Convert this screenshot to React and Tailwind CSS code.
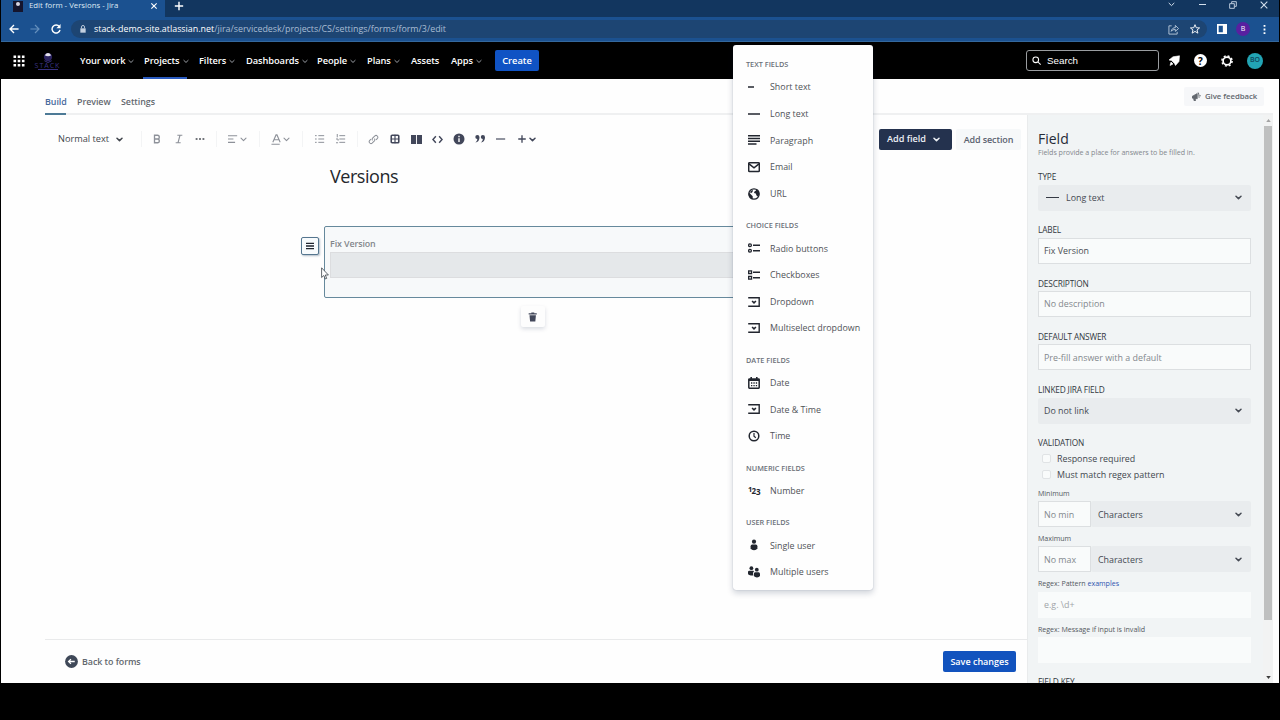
import React from "react";

const Chev = ({ className = "w-[7px] h-[5px]", sw = 1.5 }) => (
  <svg viewBox="0 0 7 5" className={"shrink-0 " + className} fill="none" stroke="currentColor" strokeWidth={sw} strokeLinecap="round" strokeLinejoin="round">
    <path d="M1 1.2 3.5 3.6 6 1.2" />
  </svg>
);

const Svg = ({ children, className = "w-3 h-3" }) => (
  <svg viewBox="0 0 12 12" className={"shrink-0 " + className} fill="none" stroke="currentColor" strokeWidth="1.4">
    {children}
  </svg>
);

const icons = {
  short: <Svg><path d="M0 6H6" strokeWidth="1.5" /></Svg>,
  long: <Svg><path d="M0 6H12" strokeWidth="1.5" /></Svg>,
  paragraph: <Svg><path d="M0 1.8H12M0 4.5H12M0 7.2H12M0 10H8.5" strokeWidth="1.5" /></Svg>,
  email: (
    <Svg>
      <rect x=".7" y="1.7" width="10.6" height="8.8" rx=".8" strokeWidth="1.5" />
      <path d="M1 2.8 6 6.8 11 2.8" strokeWidth="1.5" />
    </Svg>
  ),
  url: (
    <Svg>
      <circle cx="6" cy="6" r="5.2" strokeWidth="1.3" />
      <path d="M1 4.5 4.7 8.3V11.3C2 10.8.6 8.5.6 6ZM4 1.1 8 .9 8 2.6 6.5 3.6 6 5 7.8 5.6 8.5 7.4 10.2 8.8C12 6 11.4 2 8 1L4.5 1Z M3.5 2.5 5 2 4.5 4 3 5.2 2 4Z" fill="currentColor" stroke="none" />
    </Svg>
  ),
  radio: (
    <Svg>
      <circle cx="2" cy="3.3" r="1.4" strokeWidth="1.3" />
      <circle cx="2" cy="8.8" r="1.4" strokeWidth="1.3" />
      <path d="M5 3.3H12M5 8.8H12" strokeWidth="1.5" />
    </Svg>
  ),
  check: (
    <Svg>
      <path d="M.7 1.9H3.5V4.6H.7ZM.7 7.4H3.5V10.1H.7Z" strokeWidth="1.4" />
      <path d="M5 3.3H12M5 8.8H12" strokeWidth="1.5" />
    </Svg>
  ),
  dropdown: (
    <Svg>
      <path d="M.2 1.8H11.2V10.2H.2" strokeWidth="1.4" />
      <path d="M4.1 5 6 6.9 7.9 5" strokeWidth="1.6" />
    </Svg>
  ),
  date: (
    <Svg>
      <rect x=".8" y="1.9" width="10.4" height="9.3" rx=".6" strokeWidth="1.5" />
      <path d="M.8 3H11.2" strokeWidth="2" />
      <path d="M3.2 0V2.5M8.8 0V2.5" strokeWidth="1.6" />
      <path d="M3 6H9.5M3 8.6H9.5" strokeDasharray="1.3 1.1" strokeWidth="1.3" />
    </Svg>
  ),
  time: (
    <Svg>
      <circle cx="6" cy="6" r="4.8" strokeWidth="1.5" />
      <path d="M6 3V6.2L7.8 7.8" strokeWidth="1.2" />
    </Svg>
  ),
  number: (
    <span className="flex h-3 w-3 shrink-0 items-center font-bold leading-3">
      <span className="-mt-[3px] w-[3.5px] text-[7.5px]">1</span>
      <span className="w-[4.5px] text-[8px]">2</span>
      <span className="mt-[2px] w-[4px] text-[8px]">3</span>
    </span>
  ),
  user: (
    <Svg>
      <circle cx="6" cy="2.7" r="2.1" fill="currentColor" stroke="none" />
      <path d="M2.6 7.2Q2.6 5.6 4.2 5.6H7.8Q9.4 5.6 9.4 7.2V9.2Q8.6 11.2 6 11.2T2.6 9.2Z" fill="currentColor" stroke="none" />
    </Svg>
  ),
  users: (
    <Svg>
      <circle cx="3.4" cy="2.2" r="1.9" fill="currentColor" stroke="none" />
      <circle cx="8.8" cy="3.7" r="1.9" fill="currentColor" stroke="none" />
      <path d="M0 6Q0 4.8 1.4 4.8H5.4L6 5.6Q5 6.2 5 7.6V9.6Q0 9.6 0 7.6ZM5.8 8Q5.8 6.3 7.2 6.3H10.6Q12 6.3 12 8V10Q11 11.4 9 11.4T5.8 10Z" fill="currentColor" stroke="none" />
    </Svg>
  ),
};

const groups = [
  ["TEXT FIELDS", [["short", "Short text"], ["long", "Long text"], ["paragraph", "Paragraph"], ["email", "Email"], ["url", "URL"]]],
  ["CHOICE FIELDS", [["radio", "Radio buttons"], ["check", "Checkboxes"], ["dropdown", "Dropdown"], ["dropdown", "Multiselect dropdown"]]],
  ["DATE FIELDS", [["date", "Date"], ["dropdown", "Date & Time"], ["time", "Time"]]],
  ["NUMERIC FIELDS", [["number", "Number"]]],
  ["USER FIELDS", [["user", "Single user"], ["users", "Multiple users"]]],
];

function FieldMenu() {
  return (
    <div className="absolute left-[733px] top-[45px] h-[545px] w-[140px] rounded-[3px] bg-[#fefefe] pl-[13px] pt-[5px] shadow-[0_3px_6px_rgba(9,30,66,0.2),0_0_1px_rgba(9,30,66,0.35)]">
      {groups.map(([title, items]) => (
        <div key={title} className="mb-[4.4px]">
          <div className="h-[23.6px] whitespace-nowrap pt-[10px] text-[7.3px] font-semibold leading-[9px] text-[#6b7078]">{title}</div>
          {items.map(([icon, label]) => (
            <div key={label} className="flex h-[26.67px] items-center gap-[10px] pl-[2px] text-[8.9px] text-[#505358]">
              <span className="text-[#22262f]">{icons[icon]}</span>
              <span className="whitespace-nowrap">{label}</span>
            </div>
          ))}
        </div>
      ))}
    </div>
  );
}

const nav = [
  ["Your work", "w-[64px]", true],
  ["Projects", "w-[55px]", true],
  ["Filters", "w-[47px]", true],
  ["Dashboards", "w-[71px]", true],
  ["People", "w-[50px]", true],
  ["Plans", "w-[44px]", true],
  ["Assets", "w-[40px]", false],
  ["Apps", "w-[44px]", true],
];

function Browser() {
  return (
    <>
      <div className="flex h-[17px] shrink-0 items-center justify-between bg-[#12365f] text-white">
        <div className="flex h-full items-center">
          <div className="flex h-full w-[164px] items-center bg-[#1b5190] pb-[5px] pl-[12px]">
            <div className="flex h-[11px] w-[10px] justify-center bg-[#15152d] pt-[1px]">
              <div className="h-[4px] w-[4px] rounded-full bg-[#d7d4df]" />
            </div>
            <span className="ml-[6px] w-[121px] whitespace-nowrap text-[7.8px] text-[#dfe9f4]">Edit form - Versions - Jira</span>
            <Svg className="h-[8px] w-[8px]"><path d="M2 2 10 10M10 2 2 10" strokeWidth="1.7" /></Svg>
          </div>
          <Svg className="mb-[5px] ml-[9px] h-[10px] w-[10px]"><path d="M6 1V11M1 6H11" strokeWidth="1.7" /></Svg>
        </div>
        <div className="flex items-center pb-[8px] pr-[11px] text-[#d3dfec]">
          <Chev className="h-[5px] w-[7px]" sw={1} />
          <span className="ml-[24px] h-px w-[7px] bg-current" />
          <Svg className="ml-[23px] h-[8px] w-[8px]"><path d="M1 4H8V11H1ZM4 3.5V1H11V8H8.5" strokeWidth="1.3" /></Svg>
          <Svg className="ml-[23px] h-[8px] w-[8px]"><path d="M1 1 11 11M11 1 1 11" strokeWidth="1.6" /></Svg>
        </div>
      </div>
      <div className="flex h-[24px] shrink-0 items-center bg-[#1b5190] text-white">
        <Svg className="ml-[8px] h-[10px] w-[10px]"><path d="M11.5 6H1.5M6 1.2 1.2 6 6 10.8" strokeWidth="1.6" /></Svg>
        <Svg className="ml-[11px] h-[10px] w-[10px] text-[#6590bd]"><path d="M.5 6H10.5M6 1.2 10.8 6 6 10.8" /></Svg>
        <Svg className="ml-[11px] h-[10px] w-[10px]">
          <path d="M10 3.2A4.8 4.8 0 1 0 10.8 7" strokeWidth="1.7" />
          <path d="M11.5 0V5H6.5Z" fill="currentColor" stroke="none" />
        </Svg>
        <div className="ml-[10px] flex h-[18px] w-[1136px] items-center rounded-full bg-[#1d4573] pl-[8px]">
          <Svg className="h-[8px] w-[8px] text-[#c3d0df]"><rect x="2" y="5" width="8" height="6.5" fill="currentColor" stroke="none" /><path d="M3.7 5V3A2.3 2.3 0 0 1 8.3 3V5" /></Svg>
          <span className="ml-[7px] whitespace-nowrap text-[8.9px] text-[#a9bdd3]">
            <span className="text-white">stack-demo-site.atlassian.net</span>/jira/servicedesk/projects/CS/settings/forms/form/3/edit
          </span>
          <span className="grow" />
          <Svg className="mr-[11px] h-[11px] w-[11px] text-[#b9c9db]"><path d="M4 2H1V11H10V8.5M3.5 8C4 5 6 4 8 4V1.5L11.5 5 8 8V6C6 6 4.5 6.5 3.5 8Z" strokeWidth="1" /></Svg>
          <Svg className="mr-[7px] h-[10px] w-[10px]"><path d="M6 .8 7.5 4.5 11.5 4.7 8.4 7.2 9.5 11 6 8.9 2.5 11 3.6 7.2 .5 4.7 4.5 4.5Z" strokeWidth="1.1" /></Svg>
        </div>
        <Svg className="ml-[10px] h-[10px] w-[10px]"><path d="M1 1H11V11H1Z" strokeWidth="2" /><path d="M7 1H11V11H7Z" fill="currentColor" stroke="none" /></Svg>
        <div className="ml-[9px] flex h-[14px] w-[14px] items-center justify-center rounded-full bg-[#5820a0] text-[7px]">B</div>
        <Svg className="ml-[9px] h-[11px] w-[11px]"><path d="M5 1H7V3H5ZM5 5H7V7H5ZM5 9H7V11H5Z" fill="currentColor" stroke="none" /></Svg>
      </div>
      <div className="h-px shrink-0 bg-[#34689d]" />
    </>
  );
}

function JiraHeader() {
  return (
    <div className="flex h-[37px] shrink-0 items-center bg-black text-white">
      <svg viewBox="0 0 12 12" className="ml-[12px] h-[12px] w-[12px]" fill="currentColor">
        <path d="M.5.5h2.6v2.6H.5zM4.7.5h2.6v2.6H4.7zM8.9.5h2.6v2.6H8.9zM.5 4.7h2.6v2.6H.5zM4.7 4.7h2.6v2.6H4.7zM8.9 4.7h2.6v2.6H8.9zM.5 8.9h2.6v2.6H.5zM4.7 8.9h2.6v2.6H4.7zM8.9 8.9h2.6v2.6H8.9z" />
      </svg>
      <div className="ml-[9px] flex w-[27px] flex-col items-center">
        <svg viewBox="0 0 12 12" className="h-[11px] w-[12px]">
          <circle cx="6" cy="5.5" r="4.5" fill="#2b2360" />
          <path d="M2.5 3.5Q6-1.5 9.5 3.5Q6 5.5 2.5 3.5Z" fill="#e5e2ec" />
          <path d="M2 9.5 6 11.5 10 9.5" stroke="#3d348a" fill="none" />
        </svg>
        <span className="h-[6px] text-[7px] leading-[6px] tracking-[1px] text-[#393280]">STACK</span>
        <span className="h-px w-[20px] bg-[#393280]" />
      </div>
      <div className="ml-[19px] flex h-full items-center text-[9.3px] font-semibold">
        {nav.map(([label, w, chev]) => (
          <div key={label} className={"flex h-full shrink-0 flex-col " + w}>
            <div className="flex h-[35px] items-center gap-[3px] whitespace-nowrap pt-[3px]">
              <span className="tracking-[-0.08px]">{label}</span>
              {chev && <Chev className="h-[5px] w-[6px] text-[#a3a7ad]" sw={1.1} />}
            </div>
            {label === "Projects" && <div className="-ml-[1px] h-[2px] w-[44px] bg-[#2a5bc0]" />}
          </div>
        ))}
        <div className="flex h-[21px] w-[44px] items-center justify-center rounded-[2px] bg-[#1053c4]">Create</div>
      </div>
      <span className="grow" />
      <div className="flex h-[21px] w-[133px] items-center rounded-[3px] border border-[#9a9da0] pl-[5px] font-['Liberation_Sans',sans-serif] text-[9.8px]">
        <Svg className="h-[9px] w-[9px]"><circle cx="5" cy="5" r="3.8" /><path d="M8 8 11.5 11.5" /></Svg>
        <span className="ml-[6px] pt-[1px]">Search</span>
      </div>
      <Svg className="ml-[9px] h-[12px] w-[12px]">
        <path d="M11.5 .8 11 6.5 7.5 10.5 6.5 8.5 3.5 5.5 1 5 5 1.8Z M3 7 5 9 2 10.5Z" fill="currentColor" stroke="currentColor" strokeWidth=".6" />
      </Svg>
      <div className="ml-[14px] flex h-[13px] w-[13px] items-center justify-center rounded-full bg-white text-[10px] font-bold leading-none text-black">?</div>
      <Svg className="ml-[14px] h-[12px] w-[12px]">
        <circle cx="6" cy="6" r="3.9" strokeWidth="1.7" />
        <circle cx="6" cy="6" r="5.1" strokeWidth="1.5" strokeDasharray="2 2.006" />
      </Svg>
      <div className="ml-[14px] mr-[16px] flex h-[16px] w-[16px] items-center justify-center rounded-full bg-[#22a4b4] text-[7px] font-semibold text-[#10465c]">BO</div>
    </div>
  );
}

const Sep = ({ className }) => <span className={"h-[16px] w-px shrink-0 bg-[#f3f4f5] " + className} />;

function Toolbar() {
  return (
    <div className="flex h-[48px] shrink-0 items-center pl-[13px] text-[#8d9199]">
      <span className="w-[58px] whitespace-nowrap text-[9.2px] text-[#42464d]">Normal text</span>
      <Chev className="h-[5px] w-[7px] text-[#42464d]" />
      <Sep className="ml-[18px]" />
      <Svg className="ml-[10px] h-[10px] w-[10px]"><path d="M3 1.5H6.5A2.2 2.2 0 0 1 6.5 6H3ZM3 6H7A2.3 2.3 0 0 1 7 10.5H3Z" strokeWidth="1.6" /></Svg>
      <Svg className="ml-[12px] h-[10px] w-[10px]"><path d="M4 1.5H10M2 10.5H8M7.2 1.5 4.8 10.5" strokeWidth="1.3" /></Svg>
      <Svg className="ml-[11px] h-[10px] w-[10px] text-[#42464d]"><path d="M.8 6H3M4.9 6H7.1M9 6H11.2" strokeWidth="2" /></Svg>
      <Sep className="ml-[11px]" />
      <Svg className="ml-[11px] h-[10px] w-[10px]"><path d="M0 2H11M0 6H6.5M0 10H8.5" strokeWidth="1.3" /></Svg>
      <Chev className="ml-[2px] h-[5px] w-[7px]" sw={1.1} />
      <Sep className="ml-[12px]" />
      <Svg className="ml-[11px] h-[11px] w-[11px]"><path d="M2 9 5.5 1H6.5L10 9M3.5 6.3H8.5M.5 11.2H9.5" strokeWidth="1.2" /></Svg>
      <Chev className="ml-[1px] h-[5px] w-[7px]" sw={1.1} />
      <Sep className="ml-[12px]" />
      <Svg className="ml-[12px] h-[10px] w-[10px]"><path d="M0 2H2M4 2H11M0 6H2M4 6H11M0 10H2M4 10H11" strokeWidth="1.2" /></Svg>
      <Svg className="ml-[11px] h-[10px] w-[10px]"><path d="M1.5 0V4M4 2H11M4 6H11M0 6H2.5V8M4 10H11M0 10.5H2.5" strokeWidth="1.2" /></Svg>
      <Sep className="ml-[11px]" />
      <Svg className="ml-[10px] h-[11px] w-[11px]"><path d="M5 7A2 2 0 0 1 5 4.5L7.5 2A2 2 0 0 1 10.3 4.8L8.8 6.3M7 5A2 2 0 0 1 7 7.5L4.5 10A2 2 0 0 1 1.7 7.2L3.2 5.7" strokeWidth="1.1" /></Svg>
      <div className="flex items-center text-[#42475a]">
        <Svg className="ml-[10.5px] h-[10px] w-[10px]"><rect x="1.5" y="1.5" width="9" height="9" rx="1" strokeWidth="1.9" /><path d="M6 1V11M1 6H11" /></Svg>
        <Svg className="ml-[11px] h-[11px] w-[11px]"><path d="M0 1H5.5V11H0ZM6.5 1H12V11H6.5Z" fill="currentColor" stroke="none" /></Svg>
        <Svg className="ml-[10.5px] h-[11px] w-[11px]"><path d="M4.2 2.5 1 6 4.2 9.5M7.8 2.5 11 6 7.8 9.5" strokeWidth="1.6" /></Svg>
        <Svg className="ml-[9.5px] h-[12px] w-[12px]"><circle cx="6" cy="6" r="5.5" fill="currentColor" stroke="none" /><path d="M6 2.8V4.2M6 5.2V9" stroke="white" strokeWidth="1.4" /></Svg>
        <Svg className="ml-[9.5px] h-[12px] w-[12px]">
          <path d="M3.3 2A2 2 0 1 0 3.3 6C3.3 8 2 8.8 1.3 9.5Q5.5 9 5.5 4.2 5.5 2 3.3 2ZM8.8 2A2 2 0 1 0 8.8 6C8.8 8 7.5 8.8 6.8 9.5Q11 9 11 4.2 11 2 8.8 2Z" fill="currentColor" stroke="none" />
        </Svg>
        <Svg className="ml-[10px] h-[10px] w-[10px]"><path d="M0 6H11" /></Svg>
        <Svg className="ml-[11px] h-[10px] w-[10px]"><path d="M6 1.5V10.5M1.5 6H10.5" strokeWidth="1.6" /></Svg>
        <Chev className="ml-[2px] h-[5px] w-[7px]" />
      </div>
      <span className="grow" />
      <div className="mr-[4px] flex h-[21px] w-[73px] items-center rounded-[2px] bg-[#24324e] pl-[8px] text-[9.1px] font-semibold text-[#edf0f5]">
        <span className="w-[46px] whitespace-nowrap">Add field</span>
        <Chev />
      </div>
      <div className="mr-[6px] flex h-[21px] w-[65px] items-center justify-center whitespace-nowrap rounded-[2px] bg-[#f6f8f9] pt-[1px] text-[9px] font-semibold tracking-[-0.1px] text-[#5b6270]">Add section</div>
    </div>
  );
}

function Editor() {
  return (
    <div className="flex w-[982px] shrink-0 flex-col">
      <Toolbar />
      <div className="flex h-[476px] shrink-0 flex-col pl-[256px]">
        <div className="h-[63px] pl-[29px] text-[18px] leading-[26px] tracking-[-0.45px] text-[#24272c]">Versions</div>
        <div className="flex h-[72px] items-start">
          <div className="mt-[11px] flex h-[18px] w-[18px] items-center justify-center rounded-[2px] border border-[#55768f] bg-[#f8fbfd] text-[#20252f] shadow-[1px_1px_2px_rgba(60,90,120,0.4)]">
            <Svg className="h-[8px] w-[8px]"><path d="M0 2H12M0 6H12M0 10H12" strokeWidth="1.9" /></Svg>
          </div>
          <div className="ml-[5px] flex h-[72px] w-[420px] flex-col rounded-[2px] border border-[#66899c] bg-[#f7f9fa] pl-[5px] pt-[10px]">
            <span className="h-[15px] text-[8.9px] font-semibold leading-[14px] tracking-[-0.1px] text-[#82868b]">Fix Version</span>
            <div className="h-[26px] border border-[#dcdddf] bg-[#e5e8ea]" />
          </div>
        </div>
        <div className="ml-[220px] mt-[8px] flex h-[21px] w-[24px] items-center justify-center rounded-[2px] bg-[#fdfdfd] text-[#42475a] shadow-[0_2px_4px_rgba(9,30,66,0.15)]">
          <Svg className="h-[10px] w-[10px]"><path d="M.8 1.5H4V.5H7.5V1.5H10.5V3H.8ZM1.8 4H9.5L8.8 11.5H2.5Z" fill="currentColor" stroke="none" /></Svg>
        </div>
      </div>
      <div className="flex h-[44px] shrink-0 items-center border-t border-[#e9eaeb] pl-[20px]">
        <Svg className="h-[13px] w-[13px] text-[#3f4858]"><circle cx="6" cy="6" r="5.9" fill="currentColor" stroke="none" /><path d="M9 6H3.5M5.5 3.8 3.3 6 5.5 8.2" stroke="white" strokeWidth="1.2" /></Svg>
        <span className="ml-[4px] text-[8.9px] font-semibold tracking-[-0.05px] text-[#62676d]">Back to forms</span>
        <span className="grow" />
        <div className="mr-[11px] flex h-[21px] w-[73px] items-center justify-center whitespace-nowrap rounded-[2px] bg-[#1253be] text-[9px] font-semibold text-white">Save changes</div>
      </div>
    </div>
  );
}

const Label = ({ children }) => <div className="h-[13.5px] shrink-0 whitespace-nowrap text-[8.3px] font-medium leading-[11px] tracking-[-0.17px] text-[#33383f]">{children}</div>;
const Small = ({ children, className }) => <div className={"shrink-0 whitespace-nowrap text-[7.1px] leading-[10px] tracking-[-0.03px] " + className}>{children}</div>;
const Row = ({ children }) => <div className="h-[53.3px] shrink-0">{children}</div>;
const Input = ({ children, dark }) => (
  <div className={"flex h-[26px] items-center border border-[#dcdfe1] bg-[#f9fbfb] pl-[5px] text-[8.9px] " + (dark ? "text-[#4a4e54]" : "text-[#83888d]")}>{children}</div>
);
const Select = ({ children, className = "pl-[6px]" }) => (
  <div className={"flex h-[26px] items-center justify-between rounded-[2px] bg-[#e9ecee] pr-[9px] text-[8.9px] text-[#454a53] " + className}>
    <span className="flex items-center">{children}</span>
    <Chev />
  </div>
);
const Check = ({ children }) => (
  <div className="flex h-[16px] shrink-0 items-center pl-[4px] text-[8.9px] text-[#42474e]">
    <span className="mr-[6px] h-[9px] w-[9px] rounded-[2px] border border-[#e0e3e5] bg-[#f9fbfb]" />
    {children}
  </div>
);
const Limit = ({ label, hint }) => (
  <div className="h-[45.2px] shrink-0 pt-[5px]">
    <Small className="h-[13.3px] text-[#54585f]">{label}</Small>
    <div className="flex">
      <div className="w-[53px]"><Input>{hint}</Input></div>
      <Select className="grow pl-[7px]">Characters</Select>
    </div>
  </div>
);

function Panel() {
  return (
    <div className="flex w-[236px] shrink-0 flex-col overflow-hidden border-l border-[#e9ebec] bg-[#f1f4f5] pl-[10px] pr-[12px] pt-[15px]">
      <div className="h-[17px] shrink-0 text-[14px] font-medium leading-[18px] text-[#262b38]">Field</div>
      <Small className="h-[24px] text-[#83878d]">Fields provide a place for answers to be filled in.</Small>
      <Row><Label>TYPE</Label><Select><span className="ml-[2px] mr-[7px] h-px w-[13px] bg-[#353a44]" />Long text</Select></Row>
      <Row><Label>LABEL</Label><Input dark>Fix Version</Input></Row>
      <Row><Label>DESCRIPTION</Label><Input>No description</Input></Row>
      <Row><Label>DEFAULT ANSWER</Label><Input>Pre-fill answer with a default</Input></Row>
      <Row><Label>LINKED JIRA FIELD</Label><Select>Do not link</Select></Row>
      <Label>VALIDATION</Label>
      <Check>Response required</Check>
      <Check>Must match regex pattern</Check>
      <Limit label="Minimum" hint="No min" />
      <Limit label="Maximum" hint="No max" />
      <div className="h-[45.2px] shrink-0 pt-[5px]">
        <Small className="h-[13.3px] text-[#54585f]">Regex: Pattern <span className="text-[#2f55b0]">examples</span></Small>
        <div className="flex h-[26px] items-center bg-[#f9fbfb] pl-[6px] text-[8.9px] text-[#a0a4a8]">e.g. \d+</div>
      </div>
      <div className="h-[57px] shrink-0 pt-[5px]">
        <Small className="h-[13.3px] text-[#54585f]">Regex: Message if input is invalid</Small>
        <div className="h-[26px] bg-[#f9fbfb]" />
      </div>
      <Label>FIELD KEY</Label>
    </div>
  );
}

export default function App() {
  return (
    <div className="relative flex h-[720px] w-[1280px] flex-col overflow-hidden bg-black px-px font-['Open_Sans','Noto_Sans',sans-serif]">
      <Browser />
      <JiraHeader />
      <div className="flex h-[604px] shrink-0 flex-col overflow-hidden bg-[#fefefe] pl-[44px] pr-[6px]">
        <div className="flex h-[36px] shrink-0 items-center justify-between border-b-2 border-[#eff0f1] text-[8.9px] font-semibold tracking-[-0.05px] text-[#63686f]">
          <div className="flex h-full">
            <div className="flex h-[36px] w-[32px] flex-col text-[#47699c]"><span className="flex h-[34px] items-center pt-[11px]">Build</span><span className="h-[2px] w-[21px] bg-[#4d7a96]" /></div>
            <div className="flex h-[34px] w-[44px] items-center pt-[11px]">Preview</div>
            <div className="flex h-[34px] items-center pt-[11px]">Settings</div>
          </div>
          <div className="mr-[9px] flex h-[19px] w-[80px] items-center whitespace-nowrap rounded-[2px] bg-[#f6f7f9] pl-[8px] text-[7.8px]">
            <Svg className="mr-[4px] h-[9px] w-[9px]"><path d="M0 6 7 2V9L0 8ZM2 8.5H4.5V12H3ZM8 1 9.5 3M9.5 5H12M8.5 .8 9.5 8" fill="currentColor" strokeWidth="1" /></Svg>
            <span className="pt-[1px]">Give feedback</span>
          </div>
        </div>
        <div className="flex h-[568px] shrink-0">
          <Editor />
          <Panel />
          <div className="flex w-[10px] shrink-0 flex-col items-center bg-[#f2f3f3]">
            <div className="flex h-[11px] items-center text-[#a3a3a3]"><svg viewBox="0 0 6 4" className="h-[3px] w-[5px]" fill="currentColor"><path d="M0 4 3 0 6 4Z" /></svg></div>
            <div className="h-[494px] w-[8px] bg-[#bfc0c0]" />
            <span className="grow" />
            <div className="flex h-[12px] items-center text-[#3c3c3c]"><svg viewBox="0 0 6 4" className="h-[3px] w-[5px]" fill="currentColor"><path d="M0 0 3 4 6 0Z" /></svg></div>
          </div>
        </div>
      </div>
      <FieldMenu />
      <svg viewBox="0 0 8 13" className="absolute left-[321px] top-[267px] h-[13px] w-[8px]">
        <path d="M.6.8V10.5L2.8 8.5 4.3 12 5.7 11.4 4.3 8H7.4Z" fill="white" stroke="#3b4147" strokeWidth=".8" />
      </svg>
    </div>
  );
}
